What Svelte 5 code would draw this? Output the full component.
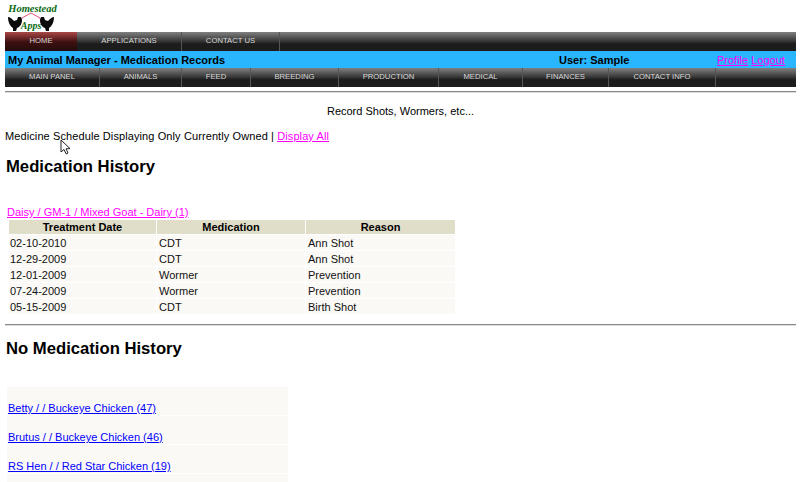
<script>
  const topNav = [
    { label: 'HOME', width: 72, active: true },
    { label: 'APPLICATIONS', width: 105 },
    { label: 'CONTACT US', width: 98 }
  ];
  const subNav = [
    { label: 'MAIN PANEL', width: 95 },
    { label: 'ANIMALS', width: 82 },
    { label: 'FEED', width: 69 },
    { label: 'BREEDING', width: 88 },
    { label: 'PRODUCTION', width: 100 },
    { label: 'MEDICAL', width: 84 },
    { label: 'FINANCES', width: 86 },
    { label: 'CONTACT INFO', width: 107 }
  ];
  const records = [
    ['02-10-2010', 'CDT', 'Ann Shot'],
    ['12-29-2009', 'CDT', 'Ann Shot'],
    ['12-01-2009', 'Wormer', 'Prevention'],
    ['07-24-2009', 'Wormer', 'Prevention'],
    ['05-15-2009', 'CDT', 'Birth Shot']
  ];
  const noHistory = ['Betty / / Buckeye Chicken (47)', 'Brutus / / Buckeye Chicken (46)', 'RS Hen / / Red Star Chicken (19)'];
</script>

<div class="page">
  <div class="logo">
    <svg width="58" height="32" viewBox="0 0 58 32">
      <!-- barn roof outline between the two chickens -->
      <path d="M20 25 L22 18 L31 13 L40 18 L42 25" fill="none" stroke="#e0285c" stroke-width="0.8" />
      <path d="M8 17 C10 17 12 19 14 21 L17 20 L18 17 L21 17 L22 20 C22 24 20 27 17 28 L16 31 L13 31 L13 28 C10 26 8 22 8 17 Z" fill="#0c0c0c" />
      <path d="M54 17 C52 17 50 19 48 21 L45 20 L44 17 L41 17 L40 20 C40 24 42 27 45 28 L46 31 L49 31 L49 28 C52 26 54 22 54 17 Z" fill="#0c0c0c" />
      <text x="32.5" y="12" class="logo-top">Homestead</text>
      <text x="31" y="29" class="logo-bottom">Apps</text>
    </svg>
  </div>

  <nav class="bar">
    {#each topNav as item}
      <a href="#top" class="tab" class:active={item.active} style="width: {item.width}px">{item.label}</a>
    {/each}
  </nav>

  <div class="title-bar">
    <strong class="title">My Animal Manager - Medication Records</strong>
    <strong class="user">User: Sample</strong>
    <span class="links"><a href="#top">Profile</a> <a href="#top">Logout</a></span>
  </div>

  <nav class="bar sub">
    {#each subNav as item}
      <a href="#top" class="tab" style="width: {item.width}px">{item.label}</a>
    {/each}
  </nav>

  <hr class="rule first" />

  <p class="intro">Record Shots, Wormers, etc...</p>
  <p class="schedule">Medicine Schedule Displaying Only Currently Owned | <a href="#top">Display All</a></p>

  <h2 class="history">Medication History</h2>

  <a href="#top" class="animal">Daisy / GM-1 / Mixed Goat - Dairy (1)</a>
  <table>
    <thead>
      <tr><th class="c1">Treatment Date</th><th class="c2">Medication</th><th class="c3">Reason</th></tr>
    </thead>
    <tbody>
      {#each records as row}
        <tr>{#each row as cell}<td>{cell}</td>{/each}</tr>
      {/each}
    </tbody>
  </table>

  <hr class="rule second" />

  <h2 class="none">No Medication History</h2>

  <div class="none-list">
    {#each noHistory as name}
      <div class="none-row"><a href="#top">{name}</a></div>
    {/each}
    <div class="none-row"></div>
  </div>

  <svg class="cursor" width="12" height="18" viewBox="0 0 12 18">
    <path d="M1 1 L1 13 L4 10.5 L6.2 15 L8 14 L6 9.8 L10 9.6 Z" fill="#fff" stroke="#222" stroke-width="1" />
  </svg>
</div>

<style>
  :global(body) { margin: 0; background: #fff; }
  .page { position: relative; width: 800px; height: 482px; overflow: hidden; font-family: "Liberation Sans", Arial, sans-serif; font-size: 11px; color: #000; }
  a { color: #ff00ff; }

  .logo { height: 32px; }
  .logo svg { display: block; }
  .logo-top { font-family: "Liberation Serif", serif; font-weight: bold; font-style: italic; font-size: 10.5px; fill: #0a6a12; text-anchor: middle; }
  .logo-bottom { font-family: "Liberation Serif", serif; font-weight: bold; font-style: italic; font-size: 10px; fill: #0a6a12; text-anchor: middle; }

  .bar { display: flex; height: 19px; margin: 0 4px 0 5px; background: linear-gradient(#808080 0%, #555 28%, #333 50%, #1c1c1c 62%, #1c1c1c 100%); }
  .tab { display: block; box-sizing: border-box; height: 100%; padding-top: 4px; text-align: center; font-size: 7.7px; line-height: 10px; color: #d8d8d8; text-decoration: none; border-right: 1px solid #555; }
  .tab.active { background: linear-gradient(#a84848 0%, #702828 30%, #3e1010 52%, #240c0c 100%); border-right: 0; }

  .title-bar { display: flex; align-items: center; height: 17px; margin: 0 4px 0 5px; background: #29b6ff; }
  .title { margin-left: 3px; width: 551px; }
  .user { width: 158px; }

  .rule { border: 0; border-top: 1px solid #888; border-bottom: 1px solid #ddd; height: 0; margin: 0 4px 0 5px; }
  .first { margin-top: 4px; }

  .intro { margin: 11px 0 0 1px; text-align: center; line-height: 14px; }
  .schedule { margin: 11px 0 0 5px; line-height: 14px; letter-spacing: 0.1px; }

  h2 { margin: 0 0 0 6px; font-size: 16.67px; line-height: 20px; }
  .history { margin-top: 14px; }

  .animal { display: block; margin: 28px 0 0 7px; line-height: 14px; }
  table { border-collapse: separate; border-spacing: 1px; margin: 0 0 0 8px; width: 448px; table-layout: fixed; font-size: 11px; }
  th { background: #e0ddc8; font-weight: bold; height: 14px; padding: 0; line-height: 13px; text-align: center; }
  td { background: #fbf9f5; height: 15px; padding: 0 0 0 2px; color: #111; }
  td:first-child { padding-left: 1px; }
  .c1 { width: 147px; }
  .c2 { width: 148px; }

  .second { margin-top: 9px; }
  .none { margin-top: 13px; }

  .none-list { width: 281px; margin: 28px 0 0 7px; display: flex; flex-direction: column; gap: 1px; }
  .none-row { height: 28px; background: #fbf9f5; padding-left: 1px; box-sizing: border-box; display: flex; align-items: flex-end; line-height: 14px; }
  .none-row a { color: #0000ff; }

  .cursor { position: absolute; left: 60px; top: 139px; }
</style>
